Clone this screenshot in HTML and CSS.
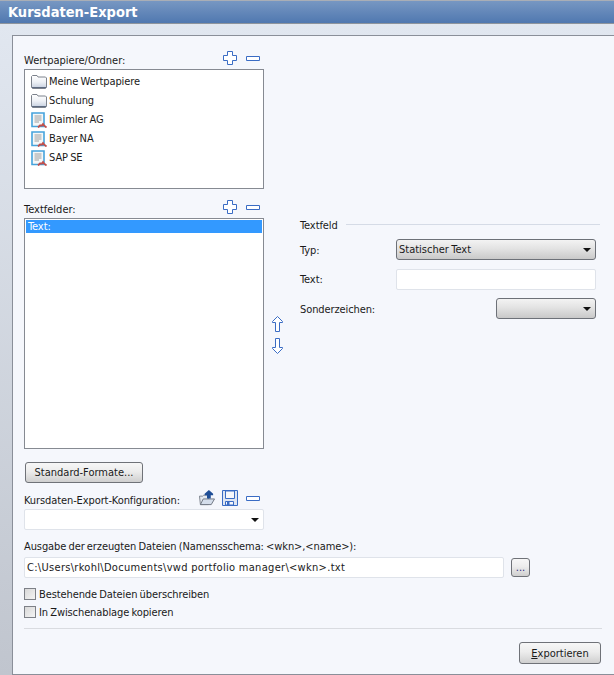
FILE: index.html
```html
<!DOCTYPE html>
<html lang="de">
<head>
    <meta charset="UTF-8">
    <title>Kursdaten-Export</title>
    <link rel="stylesheet" href="styles.css">
</head>
<body>
    <svg class="defs" width="0" height="0">
        <defs>
            <linearGradient id="folder-fill" x1="0" y1="0" x2="0" y2="1">
                <stop offset="0" stop-color="#ffffff"/>
                <stop offset="0.5" stop-color="#eef1f6"/>
                <stop offset="1" stop-color="#c3cddd"/>
            </linearGradient>
            <symbol id="folder" viewBox="0 0 16 14">
                <path d="M0.5 12.5V1.5L1.5 0.5H6L7 2H14.5L15.5 3V12.5L14.5 13.5H1.5Z" fill="url(#folder-fill)" stroke="#7c828c"/>
                <path d="M1 12.5H15" stroke="#5d6a80"/>
            </symbol>
            <symbol id="doc" viewBox="0 0 16 16">
                <path d="M1 1H13V14.5H1Z" fill="#f4f7f8" stroke="#45a3dc" stroke-width="1.6"/>
                <path d="M3.5 4H10.5M3.5 6H10.5M3.5 8H10.5M3.5 10H8" stroke="#9e9e9e"/>
                <path d="M7 15.5L9 13.5H11L12 12L13 13.5L15.5 15.5" fill="none" stroke="#c0504d" stroke-width="1.8"/>
            </symbol>
            <symbol id="plus" viewBox="0 0 14 14">
                <path d="M4.5 0.5H9.5V4.5H13.5V9.5H9.5V13.5H4.5V9.5H0.5V4.5H4.5Z" fill="#fff" stroke="#3a6cc4"/>
            </symbol>
            <symbol id="minus" viewBox="0 0 14 5">
                <path d="M0.5 0.5H13.5V4.5H0.5Z" fill="#fff" stroke="#3a6cc4"/>
            </symbol>
            <symbol id="arrow-up" viewBox="0 0 11 16">
                <path d="M5.5 0.5L10.5 5.5V6.5H7.5V15.5H3.5V6.5H0.5V5.5Z" fill="#fff" stroke="#3a6cc4"/>
            </symbol>
            <symbol id="arrow-down" viewBox="0 0 11 16">
                <path d="M3.5 0.5H7.5V9.5H10.5V10.5L5.5 15.5L0.5 10.5V9.5H3.5Z" fill="#fff" stroke="#3a6cc4"/>
            </symbol>
            <symbol id="open" viewBox="0 0 17 17">
                <path d="M1.5 15.5L0.5 6.5H4L5 5.5H10V15.5Z" fill="#e4e9f0" stroke="#7c828c"/>
                <path d="M1.5 15.5L4.5 9.5H16.5L13 15.5Z" fill="#d5deeb" stroke="#6d7480"/>
                <path d="M10.5 0L15 4V5.5H12.5V9H8.5V5.5H6V4Z" fill="#1f4e96"/>
            </symbol>
            <symbol id="save" viewBox="0 0 16 16">
                <path d="M0.5 0.5H15.5V15.5H0.5Z" fill="#dfe6f2" stroke="#3a6cc4"/>
                <path d="M3.5 1V8.5H12.5V1Z" fill="#f7f8fb" stroke="#3a6cc4"/>
                <path d="M3.5 15V11.5H11.5V15Z" fill="#f7f8fb" stroke="#3a6cc4"/>
                <path d="M5 12H7.5V15H5Z" fill="#3a6cc4"/>
            </symbol>
        </defs>
    </svg>

    <header class="titlebar">Kursdaten-Export</header>

    <div class="window">
        <main class="panel">
            <!-- Wertpapiere -->
            <section class="list-block">
                <div class="list-head">
                    <label>Wertpapiere/Ordner:</label>
                    <div class="tools">
                        <svg class="icon-plus"><use href="#plus"/></svg>
                        <svg class="icon-minus"><use href="#minus"/></svg>
                    </div>
                </div>
                <ul class="list list-short">
                    <li class="tree-row"><svg class="icon-folder"><use href="#folder"/></svg>Meine Wertpapiere</li>
                    <li class="tree-row"><svg class="icon-folder"><use href="#folder"/></svg>Schulung</li>
                    <li class="tree-row"><svg class="icon-doc"><use href="#doc"/></svg>Daimler AG</li>
                    <li class="tree-row"><svg class="icon-doc"><use href="#doc"/></svg>Bayer NA</li>
                    <li class="tree-row"><svg class="icon-doc"><use href="#doc"/></svg>SAP SE</li>
                </ul>
            </section>

            <!-- Textfelder -->
            <div class="fields-row">
                <section class="list-block">
                    <div class="list-head">
                        <label>Textfelder:</label>
                        <div class="tools">
                            <svg class="icon-plus"><use href="#plus"/></svg>
                            <svg class="icon-minus"><use href="#minus"/></svg>
                        </div>
                    </div>
                    <ul class="list list-tall">
                        <li class="selected-row">Text:</li>
                    </ul>
                </section>

                <div class="move-tools">
                    <svg class="icon-arrow"><use href="#arrow-up"/></svg>
                    <svg class="icon-arrow"><use href="#arrow-down"/></svg>
                </div>

                <section class="field-form">
                    <div class="group-title"><span>Textfeld</span><div class="group-line"></div></div>
                    <div class="form-row">
                        <label>Typ:</label>
                        <div class="combo combo-wide">Statischer Text</div>
                    </div>
                    <div class="form-row">
                        <label>Text:</label>
                        <input class="text-input input-wide" type="text">
                    </div>
                    <div class="form-row">
                        <label>Sonderzeichen:</label>
                        <div class="combo combo-small"></div>
                    </div>
                </section>
            </div>

            <button class="btn btn-formats">Standard-Formate...</button>

            <div class="config-head">
                <label>Kursdaten-Export-Konfiguration:</label>
                <div class="config-tools">
                    <svg class="icon-big icon-open"><use href="#open"/></svg>
                    <svg class="icon-big"><use href="#save"/></svg>
                    <svg class="icon-minus"><use href="#minus"/></svg>
                </div>
            </div>
            <div class="combo-flat"></div>

            <label class="output-label">Ausgabe der erzeugten Dateien (Namensschema: &lt;wkn&gt;,&lt;name&gt;):</label>
            <div class="path-row">
                <input class="text-input input-path" type="text" value="C:\Users\rkohl\Documents\vwd portfolio manager\&lt;wkn&gt;.txt">
                <button class="btn btn-browse">...</button>
            </div>

            <label class="check-row"><input type="checkbox">Bestehende Dateien überschreiben</label>
            <label class="check-row"><input type="checkbox">In Zwischenablage kopieren</label>

            <div class="divider"></div>

            <div class="actions">
                <button class="btn btn-export"><u>E</u>xportieren</button>
            </div>
        </main>
    </div>
</body>
</html>
```

FILE: styles.css
```css
* {
    margin: 0;
    padding: 0;
    box-sizing: border-box;
}
html, body {
    height: 675px;
    overflow: hidden;
}
body {
    font-family: "DejaVu Sans", sans-serif;
    font-stretch: condensed;
    font-size: 11px;
    letter-spacing: -0.1px;
    word-spacing: -0.8px;
    color: #1a1a1a;
    background-color: #e0e6ef;
}
label {
    display: block;
}
.defs {
    position: absolute;
}

/* title */
.titlebar {
    height: 24px;
    padding-left: 8px;
    font-size: 14.5px;
    font-weight: bold;
    letter-spacing: 0;
    line-height: 23px;
    color: #fff;
    background: linear-gradient(#7797c2, #5078b0);
    border-top: 1px solid #a9aeb6;
    border-bottom: 1px solid #8e949c;
}

/* panel */
.window {
    height: 651px;
    padding: 11px 0 0 12px;
    background: linear-gradient(#e1e7f0, #c0c5ce);
}
.panel {
    height: 640px;
    width: 602px;
    padding: 14px 0 0 11px;
    background-color: #f5f7fc;
    border: 1px solid #8a8f99;
    border-right: 0;
}

/* lists */
.list-block {
    width: 240px;
    margin-top: 1px;
}
.list-head {
    display: flex;
    justify-content: space-between;
    align-items: flex-end;
    height: 18px;
    padding-right: 4px;
    letter-spacing: 0;
}
.list-head label {
    line-height: 16px;
}
.tools {
    display: flex;
    align-items: center;
    gap: 9px;
    margin-bottom: 4px;
}
.icon-plus {
    width: 14px;
    height: 14px;
}
.icon-minus {
    width: 14px;
    height: 5px;
}
.list {
    list-style: none;
    background-color: #fff;
    border: 1px solid #868a92;
}
.list-short {
    height: 120px;
    padding-top: 2px;
}
.list-tall {
    height: 231px;
    padding: 1px;
}
.tree-row {
    display: flex;
    align-items: center;
    height: 19px;
    padding-left: 6px;
    gap: 2px;
}
.icon-folder {
    width: 16px;
    height: 14px;
}
.icon-doc {
    width: 16px;
    height: 16px;
}
.selected-row {
    height: 13px;
    padding-left: 2px;
    line-height: 13px;
    color: #fff;
    background-color: #3399ff;
}

/* textfeld form */
.fields-row {
    display: flex;
    margin-top: 10px;
}
.move-tools {
    display: flex;
    flex-direction: column;
    gap: 6px;
    width: 36px;
    padding: 117px 0 0 8px;
}
.icon-arrow {
    width: 11px;
    height: 16px;
}
.field-form {
    width: 300px;
    padding-top: 19px;
}
.group-title {
    display: flex;
    align-items: center;
    gap: 8px;
    height: 14px;
    margin-bottom: 7px;
}
.group-title span, .form-row label {
    padding-top: 1px;
}
.group-line {
    flex: 1;
    height: 1px;
    margin-top: -1px;
    background-color: #d5dbe6;
}
.form-row {
    display: flex;
    justify-content: space-between;
    align-items: center;
    height: 21px;
    width: 296px;
    margin-bottom: 8.5px;
}
.combo {
    position: relative;
    height: 21px;
    padding-left: 2px;
    letter-spacing: 0;
    line-height: 20px;
    border: 1px solid #6d7178;
    border-radius: 3px;
    background: linear-gradient(#f3f3f3 0, #e3e3e3 45%, #c9c9c9 100%);
}
.combo::after, .combo-flat::after {
    content: "";
    position: absolute;
    top: 8px;
    right: 4px;
    border-top: 4px solid #111;
    border-left: 4px solid transparent;
    border-right: 4px solid transparent;
}
.combo-wide, .input-wide {
    width: 200px;
}
.combo-small {
    width: 100px;
}
.text-input {
    height: 21px;
    padding-left: 2px;
    font: inherit;
    color: inherit;
    background-color: #fff;
    border: 1px solid #dfe3ea;
    border-radius: 2px;
    outline: none;
}

/* buttons */
.btn {
    font: inherit;
    letter-spacing: 0;
    color: inherit;
    border: 1px solid #6f7278;
    border-radius: 3px;
    background: linear-gradient(#f7f7f7 0, #ececec 45%, #cfcfcf 100%);
}
.btn-formats {
    display: block;
    width: 118px;
    height: 21px;
    margin: 13px 0 0 1px;
}
.btn-browse {
    width: 19px;
    height: 19px;
    line-height: 17px;
    color: #2a2a80;
}
.btn-export {
    width: 82px;
    height: 22px;
}

/* config */
.config-head {
    display: flex;
    justify-content: space-between;
    align-items: flex-end;
    width: 240px;
    height: 19px;
    margin-top: 7px;
    padding-right: 4px;
}
.config-head label {
    margin-bottom: 1px;
    line-height: 15px;
}
.config-tools {
    display: flex;
    align-items: center;
    gap: 8px;
    margin-bottom: 3px;
}
.icon-big {
    width: 16px;
    height: 16px;
}
.icon-open {
    margin-right: -1px;
}
.combo-flat {
    position: relative;
    width: 240px;
    height: 21px;
    background-color: #fff;
    border: 1px solid #dfe3ea;
    border-radius: 2px;
}
.output-label {
    margin-top: 9px;
    line-height: 16px;
}
.path-row {
    display: flex;
    align-items: center;
    gap: 7px;
    margin-top: 2px;
}
.input-path {
    width: 480px;
    letter-spacing: 0.3px;
}

/* checkboxes */
.check-row {
    display: flex;
    align-items: center;
    gap: 3px;
    height: 18px;
}
.path-row + .check-row {
    margin-top: 7px;
}
.check-row input {
    appearance: none;
    width: 12px;
    height: 12px;
    border: 1px solid #7d8087;
    background: linear-gradient(135deg, #d8d8d8, #f4f4f4);
}

.divider {
    width: 578px;
    height: 1px;
    margin-top: 7px;
    background-color: #d9dbe0;
}
.actions {
    display: flex;
    justify-content: flex-end;
    width: 578px;
    margin-top: 13px;
    padding-right: 1px;
}
```
